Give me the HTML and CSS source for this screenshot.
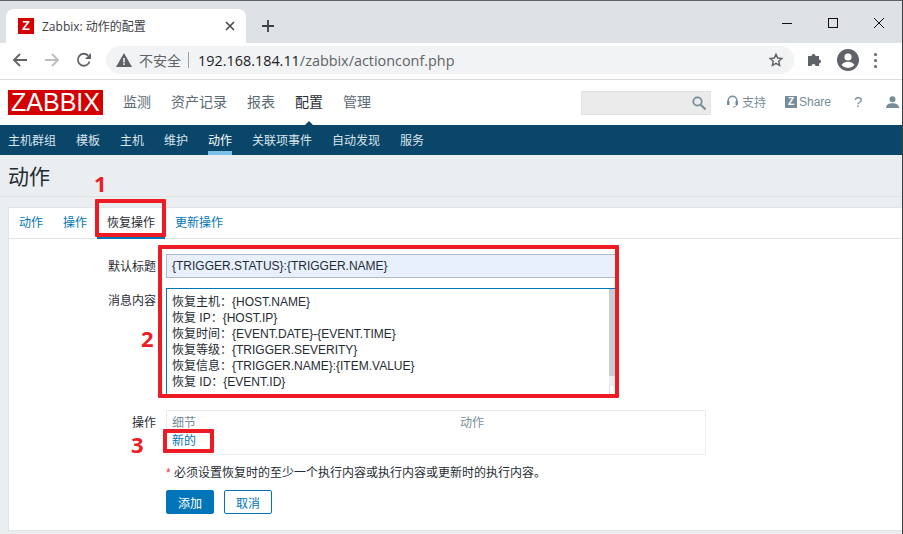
FILE: index.html
```html
<!DOCTYPE html>
<html lang="zh-CN">
<head>
  <meta charset="UTF-8">
  <title>Zabbix: 动作的配置</title>
  <link rel="stylesheet" href="styles.css">
</head>
<body>

  <div class="window">
    <!-- browser chrome -->
    <div class="tabstrip">
      <div class="tab">
        <span class="favicon">Z</span>
        <span class="tab-title">Zabbix: 动作的配置</span>
        <svg class="tab-close" width="10" height="10" viewBox="0 0 10 10"><path d="M1 1l8 8M9 1l-8 8" stroke="#45484c" stroke-width="1.6" fill="none"/></svg>
      </div>
      <svg class="new-tab" width="12" height="12" viewBox="0 0 12 12"><path d="M6 0v12M0 6h12" stroke="#3c4043" stroke-width="1.8" fill="none"/></svg>
      <div class="win-controls">
        <svg width="10" height="10" viewBox="0 0 10 10"><path d="M0 5.5h10" stroke="#111" fill="none"/></svg>
        <svg width="10" height="10" viewBox="0 0 10 10"><rect x=".5" y=".5" width="9" height="9" stroke="#111" fill="none"/></svg>
        <svg width="10" height="10" viewBox="0 0 10 10"><path d="M0 0l10 10M10 0L0 10" stroke="#111" fill="none"/></svg>
      </div>
    </div>

    <div class="toolbar">
      <svg class="tool" width="16" height="16" viewBox="0 0 16 16"><path d="M15 8H2M8 2L2 8l6 6" stroke="#5f6368" stroke-width="1.8" fill="none"/></svg>
      <svg class="tool" width="16" height="16" viewBox="0 0 16 16"><path d="M1 8h13M8 2l6 6-6 6" stroke="#babcbe" stroke-width="1.8" fill="none"/></svg>
      <svg class="tool" width="16" height="16" viewBox="0 0 16 16"><path d="M13.6 9.5A6 6 0 1 1 12.2 3.6" stroke="#5f6368" stroke-width="1.8" fill="none"/><path d="M15 1v6H9z" fill="#5f6368"/></svg>
      <div class="omnibox">
        <svg width="16" height="14" viewBox="0 0 16 14"><path d="M8 0l8 14H0z" fill="#5f6368"/><path d="M7.2 5h1.6v4.500H7.200zM7.200 10.300h1.600v1.600H7.200z" fill="#f1f3f4"/></svg>
        <span class="not-secure">不安全</span>
        <span class="omni-sep"></span>
        <span class="url">192.168.184.11<span class="url-path">/zabbix/actionconf.php</span></span>
        <svg class="star" width="16" height="16" viewBox="0 0 24 24"><path d="M12 3.500l2.600 5.600 6.100.7-4.500 4.200 1.200 6L12 17l-5.400 3 1.200-6-4.500-4.200 6.100-.7z" stroke="#5f6368" stroke-width="2.200" fill="none"/></svg>
      </div>
      <svg class="ext" width="16" height="16" viewBox="0 0 16 16"><path d="M1 5h3.500a2 2 0 1 1 4 0H12v3.500a2 2 0 1 1 0 4V15H8.500a2 2 0 1 0-4 0H1z" fill="#5f6368" transform="translate(0 -1)"/></svg>
      <svg class="avatar" width="22" height="22" viewBox="0 0 22 22"><circle cx="11" cy="11" r="11" fill="#5f6368"/><circle cx="11" cy="8" r="3.600" fill="#fff"/><path d="M4.500 16c1.500-2.500 4-3.200 6.500-3.200s5 .7 6.500 3.200a8.500 8.500 0 0 1-13 0z" fill="#fff"/></svg>
      <span class="kebab"><i></i><i></i><i></i></span>
    </div>

    <!-- zabbix header -->
    <div class="top-nav">
      <span class="logo">ZABBIX</span>
      <ul class="main-menu">
        <li>监测</li>
        <li>资产记录</li>
        <li>报表</li>
        <li class="selected">配置</li>
        <li>管理</li>
      </ul>
      <div class="search">
        <svg width="14" height="14" viewBox="0 0 14 14"><circle cx="5.500" cy="5.500" r="4.200" stroke="#768d99" stroke-width="1.800" fill="none"/><path d="M8.500 8.500l5 5" stroke="#768d99" stroke-width="2" fill="none"/></svg>
      </div>
      <span class="top-link support">
        <svg width="11" height="13" viewBox="0 0 11 13"><path d="M1.200 8V5.500a4.300 4.300 0 0 1 8.600 0V8" stroke="#768d99" stroke-width="1.500" fill="none"/><rect x="0" y="6" width="2.500" height="4" fill="#768d99"/><rect x="8.500" y="6" width="2.500" height="4" fill="#768d99"/><path d="M9.500 10c0 1.500-1.500 2-3.500 2" stroke="#768d99" fill="none"/></svg>
        支持
      </span>
      <span class="top-link share"><span class="share-z">Z</span>Share</span>
      <span class="top-link help">?</span>
      <svg class="user" width="13" height="12" viewBox="0 0 13 12"><circle cx="6.500" cy="3.200" r="3" fill="#768d99"/><path d="M0 12c0-3.500 3-4.800 6.500-4.800S13 8.500 13 12z" fill="#768d99"/></svg>
    </div>

    <ul class="sub-menu">
      <li>主机群组</li>
      <li>模板</li>
      <li>主机</li>
      <li>维护</li>
      <li class="selected">动作</li>
      <li>关联项事件</li>
      <li>自动发现</li>
      <li>服务</li>
    </ul>

    <!-- page -->
    <div class="content">
      <div class="header-title"><h1>动作</h1></div>

      <div class="card">
        <ul class="tabs">
          <li>动作</li>
          <li>操作</li>
          <li class="active">恢复操作</li>
          <li>更新操作</li>
        </ul>

        <div class="form">
          <div class="form-row">
            <label>默认标题</label>
            <div class="subject">{TRIGGER.STATUS}:{TRIGGER.NAME}</div>
          </div>

          <div class="form-row">
            <label>消息内容</label>
            <div class="message">
              <div class="message-text">恢复主机：{HOST.NAME}
恢复 IP：{HOST.IP}
恢复时间：{EVENT.DATE}-{EVENT.TIME}
恢复等级：{TRIGGER.SEVERITY}
恢复信息：{TRIGGER.NAME}:{ITEM.VALUE}
恢复 ID：{EVENT.ID}</div>
              <div class="scrollbar"><div class="thumb"></div><div class="track"></div><div class="corner"></div></div>
            </div>
          </div>

          <div class="form-row ops-row">
            <label>操作</label>
            <div class="ops">
              <div class="ops-head"><span class="ops-detail">细节</span><span>动作</span></div>
              <div class="ops-new"><a>新的</a></div>
            </div>
          </div>

          <div class="form-row note-row">
            <div class="note"><span class="asterisk">*</span> 必须设置恢复时的至少一个执行内容或执行内容或更新时的执行内容。</div>
          </div>

          <div class="form-row buttons">
            <button class="btn-add">添加</button>
            <button class="btn-cancel">取消</button>
          </div>
        </div>
      </div>
    </div>
  </div>

  <!-- annotations drawn on top of the screenshot -->
  <div class="mark mark-1"></div>
  <div class="mark mark-2"></div>
  <div class="mark mark-3"></div>
  <span class="num num-1">1</span>
  <span class="num num-2">2</span>
  <span class="num num-3">3</span>

</body>
</html>
```

FILE: styles.css
```css
* {
  box-sizing: border-box;
}

html, body {
  margin: 0;
  height: 534px;
  overflow: hidden;
}

body {
  position: relative;
  width: 903px;
  font-family: 'Liberation Sans', 'Noto Sans CJK SC', sans-serif;
  font-size: 12px;
  color: #1f2c33;
  background: #fff;
}

ul {
  list-style: none;
  margin: 0;
  padding: 0;
}

.window {
  height: 534px;
  border-top: 1px solid #5f6368;
  border-right: 1px solid #3c4043;
  display: flex;
  flex-direction: column;
}

/* Browser tab strip */
.tabstrip {
  height: 42px;
  flex: none;
  background: #dee1e6;
  padding: 8px 0 0 6px;
  display: flex;
  align-items: flex-start;
}

.tab {
  width: 240px;
  height: 34px;
  background: #fff;
  border-radius: 8px 8px 0 0;
  display: flex;
  align-items: center;
  padding: 0 11px 0 12px;
}

.favicon {
  width: 16px;
  height: 16px;
  background: #d40000;
  color: #fff;
  font-weight: bold;
  font-size: 13px;
  line-height: 16px;
  text-align: center;
  flex: none;
}

.tab-title {
  margin-left: 8px;
  flex: 1;
  font-family: 'Open Sans', 'Noto Sans CJK SC', sans-serif;
  font-size: 12px;
  color: #3c4043;
}

.new-tab {
  margin: 11px 0 0 16px;
}

.win-controls {
  margin-left: auto;
  display: flex;
  gap: 36px;
  padding: 9px 18px 0 0;
}

/* Browser toolbar */
.toolbar {
  height: 37px;
  flex: none;
  background: #fff;
  border-bottom: 1px solid #dadce0;
  display: flex;
  align-items: center;
  padding: 0 0 2px 12px;
}

.tool {
  margin-right: 16px;
}

.omnibox {
  width: 688px;
  height: 28px;
  margin-left: -2px;
  background: #f1f3f4;
  border-radius: 14px;
  display: flex;
  align-items: center;
  padding: 0 10px 0 10px;
}

.not-secure {
  margin-left: 7px;
  font-family: 'Open Sans', 'Noto Sans CJK SC', sans-serif;
  font-size: 14px;
  color: #5f6368;
}

.omni-sep {
  width: 1px;
  height: 16px;
  background: #9aa0a6;
  margin: 0 9px 0 7px;
}

.url {
  font-family: 'Open Sans', sans-serif;
  font-size: 14.4px;
  color: #202124;
}

.url-path {
  color: #5f6368;
}

.star {
  margin-left: auto;
}

.ext {
  margin-left: 13px;
}

.avatar {
  margin-left: 14px;
}

.kebab {
  margin-left: 15px;
  display: flex;
  flex-direction: column;
  gap: 3px;
}

.kebab i {
  width: 3px;
  height: 3px;
  border-radius: 50%;
  background: #5f6368;
}

/* Zabbix header */
.top-nav {
  height: 45px;
  flex: none;
  background: #fff;
  display: flex;
  align-items: center;
  padding-left: 8px;
}

.logo {
  width: 95px;
  height: 25px;
  background: #d40000;
  color: #fff;
  font-size: 25px;
  line-height: 25px;
  text-align: center;
  flex: none;
}

.main-menu {
  display: flex;
  gap: 20px;
  margin: -4px 0 0 20px;
  font-size: 14px;
  color: #5a6a73;
}

.main-menu li {
  position: relative;
}

.main-menu .selected {
  color: #1f2c33;
}

/* little arrow pointing at the active menu */
.main-menu .selected::after {
  content: "";
  position: absolute;
  left: 6px;
  top: 30px;
  border: 8px solid transparent;
  border-top: 0;
  border-bottom-color: #0a466a;
}

.search {
  width: 130px;
  height: 24px;
  margin-left: 210px;
  background: #ebebeb;
  border: 1px solid #e2e2e2;
  display: flex;
  align-items: center;
  justify-content: flex-end;
  padding-right: 4px;
  flex: none;
}

.top-link {
  color: #768d99;
  display: flex;
  align-items: center;
  margin-top: -2px;
}

.support {
  margin-left: 16px;
  gap: 4px;
}

.share {
  margin-left: 19px;
}

.share-z {
  width: 12px;
  height: 12px;
  background: #768d99;
  color: #fff;
  font-size: 10px;
  font-weight: bold;
  line-height: 12px;
  text-align: center;
  margin-right: 2px;
}

.help {
  margin-left: 23px;
  font-size: 15px;
}

.user {
  margin-left: 24px;
  margin-top: -2px;
}

/* Dark sub navigation */
.sub-menu {
  height: 30px;
  flex: none;
  background: #0a466a;
  color: #d9e4eb;
  display: flex;
  gap: 20px;
  padding-left: 8px;
}

.sub-menu li {
  height: 30px;
  line-height: 32px;
}

.sub-menu .selected {
  color: #fff;
  border-bottom: 4px solid #7cc0ea;
}

/* Page body */
.content {
  flex: 1;
  background: #ebeef0;
  padding-left: 8px;
}

.header-title {
  height: 42px;
  margin-left: -8px;
  padding-left: 8px;
  border-bottom: 1px solid #dfe4e7;
}

h1 {
  margin: 0;
  font-size: 21px;
  font-weight: normal;
  line-height: 44px;
  color: #1f2c33;
}

.card {
  margin-top: 10px;
  height: 324px;
  background: #fff;
  border: 1px solid #dfe4e7;
  border-right: 0;
}

.tabs {
  height: 31px;
  display: flex;
  border-bottom: 1px solid #dfe4e7;
  color: #0275b8;
}

.tabs li {
  padding: 0 10px;
  height: 31px;
  line-height: 31px;
}

.tabs .active {
  color: #1f2c33;
  border-bottom: 2px solid #0275b8;
}

.form {
  padding-top: 15px;
}

.form-row {
  display: flex;
  align-items: flex-start;
  padding-left: 157px;
  position: relative;
}

label {
  position: absolute;
  right: calc(100% - 147px);
  top: 3px;
  white-space: nowrap;
}

.subject {
  width: 449px;
  height: 24px;
  line-height: 22px;
  padding-left: 5px;
  background: #e8f0fe;
  border: 1px solid #acbbc7;
  border-right: 0;
}

.form-row + .form-row {
  margin-top: 10px;
}

.message {
  width: 449px;
  height: 108px;
  display: flex;
  background: #fff;
  border: 1px solid #0275b8;
  border-width: 1px 0 1px 1px;
}

.message-text {
  flex: 1;
  padding-top: 5px;
  padding-left: 5px;
  white-space: pre;
  line-height: 16px;
}

.scrollbar {
  width: 6px;
  display: flex;
  flex-direction: column;
}

.thumb {
  height: 87px;
  background: #c5ced4;
}

.track {
  height: 10px;
  background: #ebeef0;
}

.corner {
  flex: 1;
  background: #fff;
  border-left: 1px solid #dfe4e7;
}

.form-row.ops-row {
  margin-top: 14px;
}

.ops {
  width: 540px;
  height: 45px;
  border: 1px solid #ebeef0;
  padding-left: 5px;
}

.ops-head {
  display: flex;
  height: 21px;
  line-height: 25px;
  color: #768d99;
}

.ops-detail {
  width: 288px;
}

.ops-new {
  line-height: 18px;
  margin-top: 0;
}

.ops-new a {
  color: #0275b8;
  border-bottom: 1px dotted #0275b8;
  display: inline-block;
  line-height: 15px;
}

.form-row.note-row {
  margin-top: 8px;
}

.asterisk {
  color: #dc3545;
}

.form-row.buttons {
  margin-top: 10px;
  gap: 10px;
}

button {
  width: 48px;
  height: 24px;
  padding: 0;
  border-radius: 2px;
  font-family: inherit;
  font-size: 12px;
}

.btn-add {
  background: #0275b8;
  border: 1px solid #0275b8;
  color: #fff;
}

.btn-cancel {
  background: #fff;
  border: 1px solid #0275b8;
  color: #0275b8;
}

/* Red markers added over the screenshot */
.mark {
  position: absolute;
  border: 4px solid #ed1c24;
  border-radius: 1px;
}

.mark-1 {
  left: 95px;
  top: 199px;
  width: 71px;
  height: 38px;
}

.mark-2 {
  left: 158px;
  top: 245px;
  width: 461px;
  height: 153px;
}

.mark-3 {
  left: 163px;
  top: 429px;
  width: 51px;
  height: 24px;
}

.num {
  position: absolute;
  color: #ed1c24;
  font-family: 'Noto Sans', sans-serif;
  font-weight: bold;
  font-size: 22px;
  line-height: 24px;
}

.num-1 {
  left: 94px;
  top: 171px;
}

.num-2 {
  left: 141px;
  top: 326px;
}

.num-3 {
  left: 131px;
  top: 432px;
}
```
